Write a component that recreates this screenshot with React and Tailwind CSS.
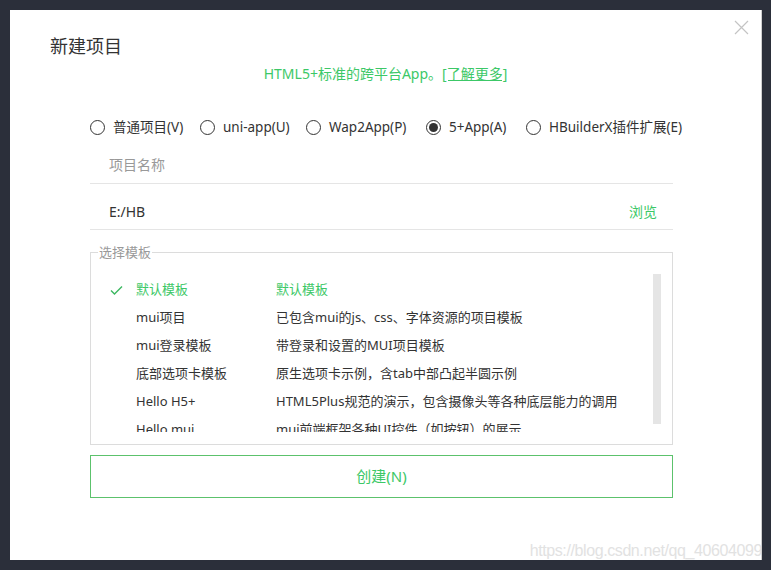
import React from "react";

const font = { fontFamily: '"Noto Sans", "Noto Sans CJK SC", sans-serif' };

function Radio({ label, checked, w }) {
  return (
    <label className={`flex items-center gap-[8px] text-[13.5px] text-[#333] whitespace-nowrap shrink-0 ${w}`}>
      <span className="w-[15px] h-[15px] rounded-full border border-[#333] flex items-center justify-center shrink-0">
        {checked && <span className="w-[9px] h-[9px] rounded-full bg-[#333]" />}
      </span>
      <span>{label}</span>
    </label>
  );
}

const rows = [
  ["默认模板", "默认模板", true],
  ["mui项目", "已包含mui的js、css、字体资源的项目模板"],
  ["mui登录模板", "带登录和设置的MUI项目模板"],
  ["底部选项卡模板", "原生选项卡示例，含tab中部凸起半圆示例"],
  ["Hello H5+", "HTML5Plus规范的演示，包含摄像头等各种底层能力的调用"],
  ["Hello mui", "mui前端框架各种UI控件（如按钮）的展示"],
];

export default function App() {
  return (
    <div className="w-[771px] h-[570px] bg-[#2b2f3a] p-[10px] pr-[9px] pb-[10px] relative" style={font}>
      <div className="w-full h-full bg-white border-r border-[#cfcfcf] relative flex flex-col overflow-hidden">
        <button className="absolute right-[12px] top-[10px] text-[#c4c4c4]">
          <svg width="15" height="15" viewBox="0 0 15 15" stroke="currentColor" strokeWidth="1.2">
            <path d="M1 1L14 14M14 1L1 14" />
          </svg>
        </button>
        <div className="pl-[40px] pt-[23px] text-[18px] text-[#333] leading-[26px]">新建项目</div>
        <div className="text-center text-[14px] text-[#3cc867] mt-[5px] leading-[20px]">
          HTML5+标准的跨平台App。<span className="underline">[了解更多]</span>
        </div>
        <div className="ml-[80px] mr-[88px] mt-[33px]">
          <div className="flex items-center h-[20px]">
            <Radio label="普通项目(V)" w="w-[110px]" />
            <Radio label="uni-app(U)" w="w-[106px]" />
            <Radio label="Wap2App(P)" w="w-[120px]" />
            <Radio label="5+App(A)" w="w-[100px]" checked />
            <Radio label="HBuilderX插件扩展(E)" w="" />
          </div>
          <div className="mt-[9px] h-[38px] border-b border-[#e5e5e5] flex items-center pl-[19px] text-[14px] text-[#999]">
            项目名称
          </div>
          <div className="h-[46px] pt-[10px] border-b border-[#e5e5e5] flex items-center justify-between pl-[19px] pr-[16px] text-[14px]">
            <span className="text-[#333]">E:/HB</span>
            <span className="text-[#3cc867]">浏览</span>
          </div>
          <fieldset className="mt-[15px] h-[200px] border border-[#dcdcdc] relative px-0 pb-[5px] overflow-hidden">
            <legend className="ml-[7px] px-[1px] text-[13px] text-[#999] leading-[15px]">选择模板</legend>
            <div className="absolute right-[11px] top-[14px] w-[8px] h-[150px] bg-[#e5e5e5]" />
            <div className="pt-[16px] h-[172px] overflow-hidden">
              {rows.map(([a, b, sel]) => (
                <div key={a} className={`flex items-center h-[28px] text-[13px] whitespace-nowrap ${sel ? "text-[#3cc867]" : "text-[#333]"}`}>
                  <span className="w-[45px] pl-[19px]">
                    {sel && (
                      <svg width="13" height="11" viewBox="0 0 13 11" fill="none" stroke="#3cb861" strokeWidth="1.4">
                        <path d="M1 5.5L4.5 9L12 1.5" />
                      </svg>
                    )}
                  </span>
                  <span className="w-[140px]">{a}</span>
                  <span>{b}</span>
                </div>
              ))}
            </div>
          </fieldset>
          <button className="mt-[10px] w-full h-[43px] border border-[#5cc26c] text-[15px] text-[#3cc867] flex items-center justify-center">
            创建(N)
          </button>
        </div>
        <div
          className="absolute right-[-1px] bottom-[-2px] text-[16px] text-[#e2e2e2] leading-[22px] tracking-[-0.4px] whitespace-nowrap"
          style={{ fontFamily: '"Liberation Sans", sans-serif' }}
        >
          https://blog.csdn.net/qq_40604099
        </div>
      </div>
    </div>
  );
}
